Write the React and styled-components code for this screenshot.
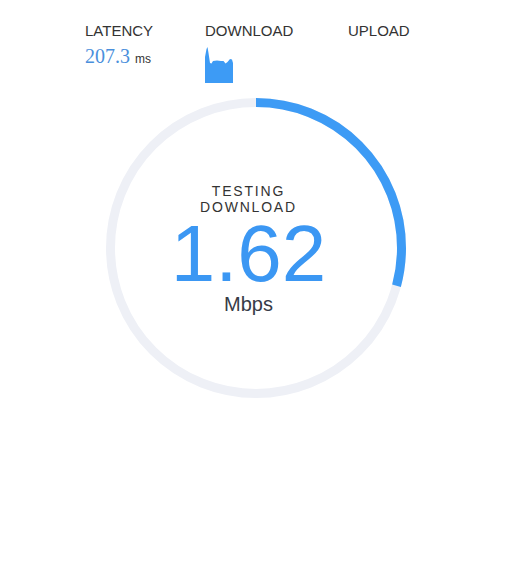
import styled, { createGlobalStyle } from 'styled-components';

const GlobalStyle = createGlobalStyle`
  body {
    margin: 0;
    background: #ffffff;
    font-family: Arial, "Liberation Sans", sans-serif;
  }
`;

const Page = styled.div`
  width: 511px;
  height: 565px;
  background: #fff;
`;

const Stats = styled.div`
  display: flex;
  padding: 22px 0 0 85px;
`;

const Stat = styled.div`
  width: ${(p) => p.$width || 'auto'};
  display: flex;
  flex-direction: column;
`;

const Label = styled.div`
  font-size: 15px;
  line-height: 17px;
  color: #333;
`;

const Value = styled.div`
  margin-top: 5px;
  line-height: 24px;
  white-space: nowrap;

  b {
    font-weight: normal;
    font-family: "Liberation Serif", "Times New Roman", serif;
    font-size: 20px;
    color: #4a8fdc;
  }

  span {
    margin-left: 5px;
    font-size: 12px;
    color: #333;
  }
`;

const Graph = styled.svg`
  display: block;
  margin-top: 8px;
  width: 28px;
  height: 36px;
`;

const Gauge = styled.div`
  display: grid;
  width: 300px;
  height: 300px;
  margin: 15px auto 0;

  & > * {
    grid-area: 1 / 1;
  }
`;

const Ring = styled.svg`
  width: 300px;
  height: 300px;
`;

const Readout = styled.div`
  padding: 85px 14px 0 0;
  text-align: center;
  color: #333;
`;

const Stage = styled.div`
  font-size: 14px;
  line-height: 16px;
  letter-spacing: 1.8px;
`;

const Speed = styled.div`
  font-size: 80px;
  line-height: 80px;
  margin-top: -1px;
  color: #3b97f3;
`;

const Unit = styled.div`
  font-size: 20px;
  line-height: 20px;
  color: #373b47;
`;

const R = 145.5;
const C = 2 * Math.PI * R;
const progress = 105 / 360;

export default function App() {
  return (
    <Page>
      <GlobalStyle />
      <Stats>
        <Stat $width="120px">
          <Label>LATENCY</Label>
          <Value>
            <b>207.3</b>
            <span>ms</span>
          </Value>
        </Stat>
        <Stat $width="143px">
          <Label>DOWNLOAD</Label>
          <Graph viewBox="0 0 28 36">
            <path
              d="M0 36 L0 10 L1.5 2 L2.5 0 L3.5 6 L5 16 L6.5 16.5 L8 14 L12 13.5 L16 14 L18.5 14 L20.5 16.5 L22.5 15 L25 12 L27 12.5 L28 16 L28 36 Z"
              fill="#3d9bf5"
            />
          </Graph>
        </Stat>
        <Stat>
          <Label>UPLOAD</Label>
        </Stat>
      </Stats>

      <Gauge>
        <Ring viewBox="0 0 300 300">
          <circle cx="150" cy="150" r={R} fill="none" stroke="#eef0f6" strokeWidth="9" />
          <circle
            cx="150"
            cy="150"
            r={R}
            fill="none"
            stroke="#3d9bf5"
            strokeWidth="9"
            strokeDasharray={`${C * progress} ${C}`}
            transform="rotate(-90 150 150)"
          />
        </Ring>
        <Readout>
          <Stage>
            TESTING
            <br />
            DOWNLOAD
          </Stage>
          <Speed>1.62</Speed>
          <Unit>Mbps</Unit>
        </Readout>
      </Gauge>
    </Page>
  );
}
